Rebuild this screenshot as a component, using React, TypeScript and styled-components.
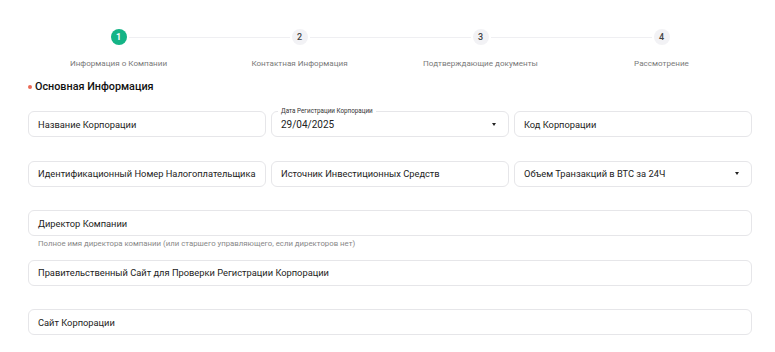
import React from "react";
import styled, { createGlobalStyle } from "styled-components";

const Global = createGlobalStyle`
  html, body { margin: 0; padding: 0; background: #fff; }
  body { font-family: Roboto, "Noto Sans", Arial, sans-serif; color: #222; }
`;

const Page = styled.div`
  width: 724px;
  padding: 29px 0 0 28px;
`;

const Stepper = styled.div`
  display: grid;
  grid-template-columns: repeat(4, minmax(0, 1fr));
`;

const Step = styled.div<{ $last?: boolean }>`
  position: relative;
  display: flex;
  flex-direction: column;
  align-items: center;
  &::after {
    content: "";
    display: ${(p) => (p.$last ? "none" : "block")};
    position: absolute;
    top: 8px;
    left: calc(50% + 10px);
    width: calc(100% - 20px);
    height: 1px;
    background: #efeff2;
  }
`;

const Circle = styled.div<{ $active?: boolean }>`
  width: 16px;
  height: 16px;
  border-radius: 50%;
  display: flex;
  align-items: center;
  justify-content: center;
  font-size: 9px;
  font-weight: ${(p) => (p.$active ? 700 : 500)};
  color: ${(p) => (p.$active ? "#fff" : "#444")};
  background: ${(p) => (p.$active ? "#14b486" : "#f2f2f5")};
`;

const StepLabel = styled.div`
  margin-top: 12px;
  font-size: 8.1px;
  line-height: 12px;
  color: #7a7a7a;
`;

const Title = styled.div`
  margin-top: 10px;
  display: flex;
  align-items: center;
  gap: 3px;
  font-size: 10.8px;
  line-height: 16px;
  font-weight: 500;
  color: #111;
  &::before {
    content: "";
    width: 4px;
    height: 4px;
    border-radius: 50%;
    background: #ea6a56;
  }
`;

const Form = styled.div`
  margin-top: 16px;
  display: flex;
  flex-direction: column;
`;

const Grid = styled.div`
  display: grid;
  grid-template-columns: repeat(3, minmax(0, 1fr));
  column-gap: 5px;
`;

const Block = styled.div`
  display: flex;
  flex-direction: column;
  min-width: 0;
  min-height: 49.5px;
`;

const Field = styled.div`
  position: relative;
  box-sizing: border-box;
  height: 26px;
  border: 1px solid #e6e6e9;
  border-radius: 6px;
  display: flex;
  align-items: center;
  padding: 0 3px 0 9px;
  color: #222;
  white-space: nowrap;
`;

const Value = styled.span<{ $big?: boolean }>`
  flex: 1;
  font-size: ${(p) => (p.$big ? "10px" : "9.3px")};
  padding-top: ${(p) => (p.$big ? "1px" : "0")};
`;

const Floating = styled.span`
  position: absolute;
  top: -6px;
  left: 6px;
  padding: 0 3px;
  background: #fff;
  font-size: 6.3px;
  line-height: 10px;
  color: #333;
`;

const Caret = styled.span`
  width: 0;
  height: 0;
  margin-right: 9px;
  border-left: 2.5px solid transparent;
  border-right: 2.5px solid transparent;
  border-top: 3.5px solid #222;
`;

const Helper = styled.div`
  margin-top: 2px;
  padding-left: 10px;
  font-size: 7.8px;
  line-height: 12px;
  color: #888;
`;

const steps = [
  "Информация о Компании",
  "Контактная Информация",
  "Подтверждающие документы",
  "Рассмотрение",
];

export default function App() {
  return (
    <>
      <Global />
      <Page>
        <Stepper>
          {steps.map((s, i) => (
            <Step key={s} $last={i === steps.length - 1}>
              <Circle $active={i === 0}>{i + 1}</Circle>
              <StepLabel>{s}</StepLabel>
            </Step>
          ))}
        </Stepper>
        <Title>Основная Информация</Title>
        <Form>
          <Grid>
            <Block>
              <Field>
                <Value>Название Корпорации</Value>
              </Field>
            </Block>
            <Block>
              <Field>
                <Floating>Дата Регистрации Корпорации</Floating>
                <Value $big>29/04/2025</Value>
                <Caret />
              </Field>
            </Block>
            <Block>
              <Field>
                <Value>Код Корпорации</Value>
              </Field>
            </Block>
            <Block>
              <Field>
                <Value>Идентификационный Номер Налогоплательщика</Value>
              </Field>
            </Block>
            <Block>
              <Field>
                <Value>Источник Инвестиционных Средств</Value>
              </Field>
            </Block>
            <Block>
              <Field>
                <Value>Объем Транзакций в BTC за 24Ч</Value>
                <Caret />
              </Field>
            </Block>
          </Grid>
          <Block>
            <Field>
              <Value>Директор Компании</Value>
            </Field>
            <Helper>
              Полное имя директора компании (или старшего управляющего, если директоров нет)
            </Helper>
          </Block>
          <Block>
            <Field>
              <Value>Правительственный Сайт для Проверки Регистрации Корпорации</Value>
            </Field>
          </Block>
          <Block>
            <Field>
              <Value>Сайт Корпорации</Value>
            </Field>
          </Block>
        </Form>
      </Page>
    </>
  );
}
